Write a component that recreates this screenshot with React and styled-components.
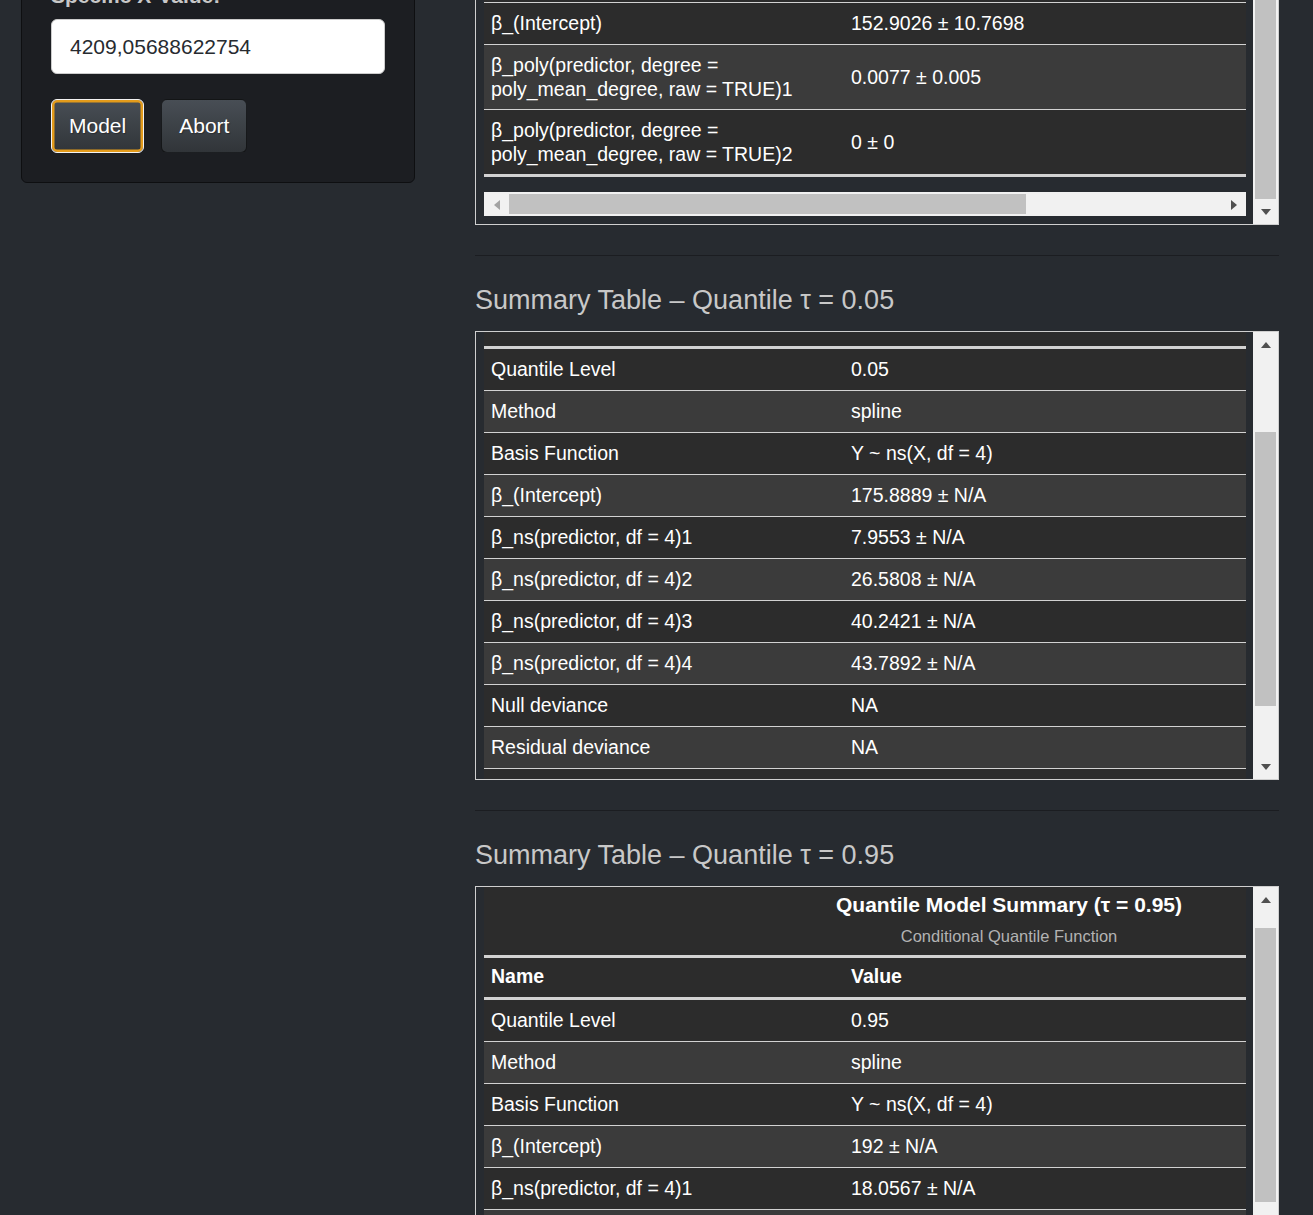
import React from "react";
import styled, { createGlobalStyle } from "styled-components";

const GlobalStyle = createGlobalStyle`
  html, body {
    margin: 0;
    padding: 0;
    overflow: hidden;
    background: #272b30;
  }
  body {
    font-family: "Liberation Sans", Arial, sans-serif;
    color: #c8c8c8;
  }
`;

const Page = styled.div`
  display: flex;
  align-items: flex-start;
  padding-left: 21px;
`;

const Sidebar = styled.div`
  flex: none;
  width: 394px;
  margin-top: -49px;
`;

const Well = styled.div`
  background: #1c1e22;
  border: 1px solid #0e0f11;
  border-radius: 6px;
  padding: 29px;
`;

const Label = styled.label`
  display: block;
  font-size: 21px;
  font-weight: bold;
  line-height: 30px;
  margin-bottom: 8px;
  color: #c8c8c8;
`;

const TextInput = styled.input`
  display: block;
  box-sizing: border-box;
  width: 100%;
  height: 55px;
  padding: 0 18px;
  font: 21px "Liberation Sans", Arial, sans-serif;
  color: #272b30;
  background: #fff;
  border: 1px solid #cccccc;
  border-radius: 6px;
  outline: none;
`;

const ButtonRow = styled.div`
  display: flex;
  gap: 17px;
  margin-top: 25px;
`;

const Button = styled.button`
  height: 54px;
  padding: 0 17px;
  font: 21px "Liberation Sans", Arial, sans-serif;
  color: #fff;
  text-shadow: 1px 1px 1px rgba(0, 0, 0, 0.3);
  background-image: linear-gradient(#484e55, #3a3f44 60%, #313539);
  border: 1px solid ${(p) => (p.$focused ? "#f2f2f2" : "rgba(0,0,0,0.6)")};
  box-shadow: ${(p) => (p.$focused ? "inset 0 0 0 2.5px #e39b1b" : "none")};
  border-radius: 6px;
  cursor: pointer;
`;

const Main = styled.div`
  flex: none;
  width: 804px;
  margin-left: 60px;
  margin-top: -1px;
`;

const Divider = styled.hr`
  margin: 30px 0 0;
  height: 0;
  border: 0;
  border-top: 1px solid #1b1d21;
`;

const Heading = styled.h3`
  margin: 29px 0 16px;
  font-size: 27px;
  line-height: 30px;
  font-weight: normal;
  color: #c8c8c8;
`;

const Box = styled.div`
  display: flex;
  box-sizing: border-box;
  height: ${(p) => p.$height}px;
  border: 1px solid #cfcfcf;
  overflow: hidden;
`;

const BoxBody = styled.div`
  flex: 1;
  min-width: 0;
  padding: 0 7px 0 8px;
  overflow: hidden;
`;

const TableClip = styled.div`
  overflow: hidden;
  background: #2c2c2c;
  padding-top: ${(p) => p.$strip || 0}px;
`;

const Table = styled.table`
  width: 1050px;
  table-layout: fixed;
  border-collapse: separate;
  border-spacing: 0;
  color: #fff;
  font-size: 19.5px;
  line-height: 24px;
  background: #2c2c2c;
  border-bottom: ${(p) => (p.$closed ? "3px solid #d2d2d2" : "none")};

  ${(p) =>
    !p.$continued &&
    `
    tbody tr:first-child td { border-top-width: 3px; }
  `}
`;

const Row = styled.tr`
  background: ${(p) => (p.$light ? "#3b3b3b" : "#2c2c2c")};
`;

const Cell = styled.td`
  padding: ${(p) => (p.$wrap ? "7.5px 7px 8.5px" : "8px 7px 9px")};
  border-top: 1px solid #d2d2d2;
  vertical-align: middle;
  text-align: left;
`;

const HeadCell = styled.th`
  padding: 6px 7px 9px;
  border-top: 3px solid #d2d2d2;
  text-align: left;
  font-weight: bold;
  background: #2c2c2c;
`;

const TitleCell = styled.th`
  padding: 5px 0 8px;
  text-align: center;
  background: #2c2c2c;
`;

const TableTitle = styled.div`
  font-size: 21px;
  font-weight: bold;
  line-height: 26px;
  color: #fff;
`;

const TableSubtitle = styled.div`
  margin-top: 7px;
  font-size: 16.5px;
  font-weight: normal;
  line-height: 22px;
  color: #b3b3b3;
`;

const VScroll = styled.div`
  flex: none;
  width: 25px;
  display: flex;
  flex-direction: column;
  background: #f1f1f1;
`;

const ArrowButton = styled.div`
  flex: none;
  width: 25px;
  height: 25px;
  display: flex;
  align-items: center;
  justify-content: center;
`;

const Triangle = styled.span`
  width: 0;
  height: 0;
  ${(p) =>
    p.$dir === "up" || p.$dir === "down"
      ? `
    border-left: 5.5px solid transparent;
    border-right: 5.5px solid transparent;
    border-${p.$dir === "up" ? "bottom" : "top"}: 6px solid #505050;
  `
      : `
    border-top: 5.5px solid transparent;
    border-bottom: 5.5px solid transparent;
    border-${p.$dir === "left" ? "right" : "left"}: 6px solid ${p.$dir === "left" ? "#a3a3a3" : "#505050"};
  `}
`;

const Track = styled.div`
  flex: 1;
  min-height: 0;
`;

const VThumb = styled.div`
  margin: ${(p) => p.$top}px 2px 0;
  height: ${(p) => p.$size}px;
  background: #c1c1c1;
`;

const HScroll = styled.div`
  display: flex;
  height: 24px;
  margin-top: 15px;
  background: #f1f1f1;
`;

const HTrack = styled.div`
  flex: 1;
  display: flex;
  align-items: flex-start;
`;

const HThumb = styled.div`
  margin-top: 2px;
  margin-left: ${(p) => p.$left}px;
  width: ${(p) => p.$size}px;
  height: 20px;
  background: #c1c1c1;
`;

const Scrollbar = ({ showUp = true, top, size }) => (
  <VScroll>
    {showUp && (
      <ArrowButton>
        <Triangle $dir="up" />
      </ArrowButton>
    )}
    <Track>
      <VThumb $top={top} $size={size} />
    </Track>
    <ArrowButton>
      <Triangle $dir="down" />
    </ArrowButton>
  </VScroll>
);

const Cols = () => (
  <colgroup>
    <col style={{ width: 360 }} />
    <col />
  </colgroup>
);

// rows whose text lies past the visible edge of a scroll box are left empty
const Body = ({ rows, trailing = 0 }) => (
  <tbody>
    {rows.map(([name, value, wrap], i) => (
      <Row key={i} $light={i % 2 === 1}>
        <Cell $wrap={wrap}>{name}</Cell>
        <Cell $wrap={wrap}>{value}</Cell>
      </Row>
    ))}
    {Array.from({ length: trailing }, (_, j) => (
      <Row key={`t${j}`} $light={(rows.length + j) % 2 === 1}>
        <Cell>&nbsp;</Cell>
        <Cell>&nbsp;</Cell>
      </Row>
    ))}
  </tbody>
);

const polyRows = [
  ["β_(Intercept)", "152.9026 ± 10.7698"],
  ["β_poly(predictor, degree = poly_mean_degree, raw = TRUE)1", "0.0077 ± 0.005", true],
  ["β_poly(predictor, degree = poly_mean_degree, raw = TRUE)2", "0 ± 0", true],
];

const lowRows = [
  ["Quantile Level", "0.05"],
  ["Method", "spline"],
  ["Basis Function", "Y ~ ns(X, df = 4)"],
  ["β_(Intercept)", "175.8889 ± N/A"],
  ["β_ns(predictor, df = 4)1", "7.9553 ± N/A"],
  ["β_ns(predictor, df = 4)2", "26.5808 ± N/A"],
  ["β_ns(predictor, df = 4)3", "40.2421 ± N/A"],
  ["β_ns(predictor, df = 4)4", "43.7892 ± N/A"],
  ["Null deviance", "NA"],
  ["Residual deviance", "NA"],
];

const highRows = [
  ["Quantile Level", "0.95"],
  ["Method", "spline"],
  ["Basis Function", "Y ~ ns(X, df = 4)"],
  ["β_(Intercept)", "192 ± N/A"],
  ["β_ns(predictor, df = 4)1", "18.0567 ± N/A"],
];

const App = () => {
  return (
    <>
      <GlobalStyle />
      <Page>
        <Sidebar>
          <Well>
            <Label htmlFor="xval">Specific X-Value:</Label>
            <TextInput id="xval" type="text" defaultValue="4209,05688622754" />
            <ButtonRow>
              <Button $focused>Model</Button>
              <Button>Abort</Button>
            </ButtonRow>
          </Well>
        </Sidebar>

        <Main>
          <Box $height={226}>
            <BoxBody>
              <TableClip $strip={2}>
                <Table $continued $closed>
                  <Cols />
                  <Body rows={polyRows} />
                </Table>
              </TableClip>
              <HScroll>
                <ArrowButton>
                  <Triangle $dir="left" />
                </ArrowButton>
                <HTrack>
                  <HThumb $left={0} $size={517} />
                </HTrack>
                <ArrowButton>
                  <Triangle $dir="right" />
                </ArrowButton>
              </HScroll>
            </BoxBody>
            <Scrollbar showUp={false} top={0} size={199} />
          </Box>

          <Divider />
          <Heading>Summary Table – Quantile τ = 0.05</Heading>
          <Box $height={449}>
            <BoxBody>
              <TableClip $strip={14}>
                <Table>
                  <Cols />
                  <Body rows={lowRows} trailing={1} />
                </Table>
              </TableClip>
            </BoxBody>
            <Scrollbar top={75} size={274} />
          </Box>

          <Divider />
          <Heading>Summary Table – Quantile τ = 0.95</Heading>
          <Box $height={449}>
            <BoxBody>
              <TableClip>
                <Table>
                  <Cols />
                  <thead>
                    <tr>
                      <TitleCell colSpan={2}>
                        <TableTitle>Quantile Model Summary (τ = 0.95)</TableTitle>
                        <TableSubtitle>Conditional Quantile Function</TableSubtitle>
                      </TitleCell>
                    </tr>
                    <tr>
                      <HeadCell>Name</HeadCell>
                      <HeadCell>Value</HeadCell>
                    </tr>
                  </thead>
                  <Body rows={highRows} trailing={2} />
                </Table>
              </TableClip>
            </BoxBody>
            <Scrollbar top={16} size={274} />
          </Box>
        </Main>
      </Page>
    </>
  );
};

export default App;
